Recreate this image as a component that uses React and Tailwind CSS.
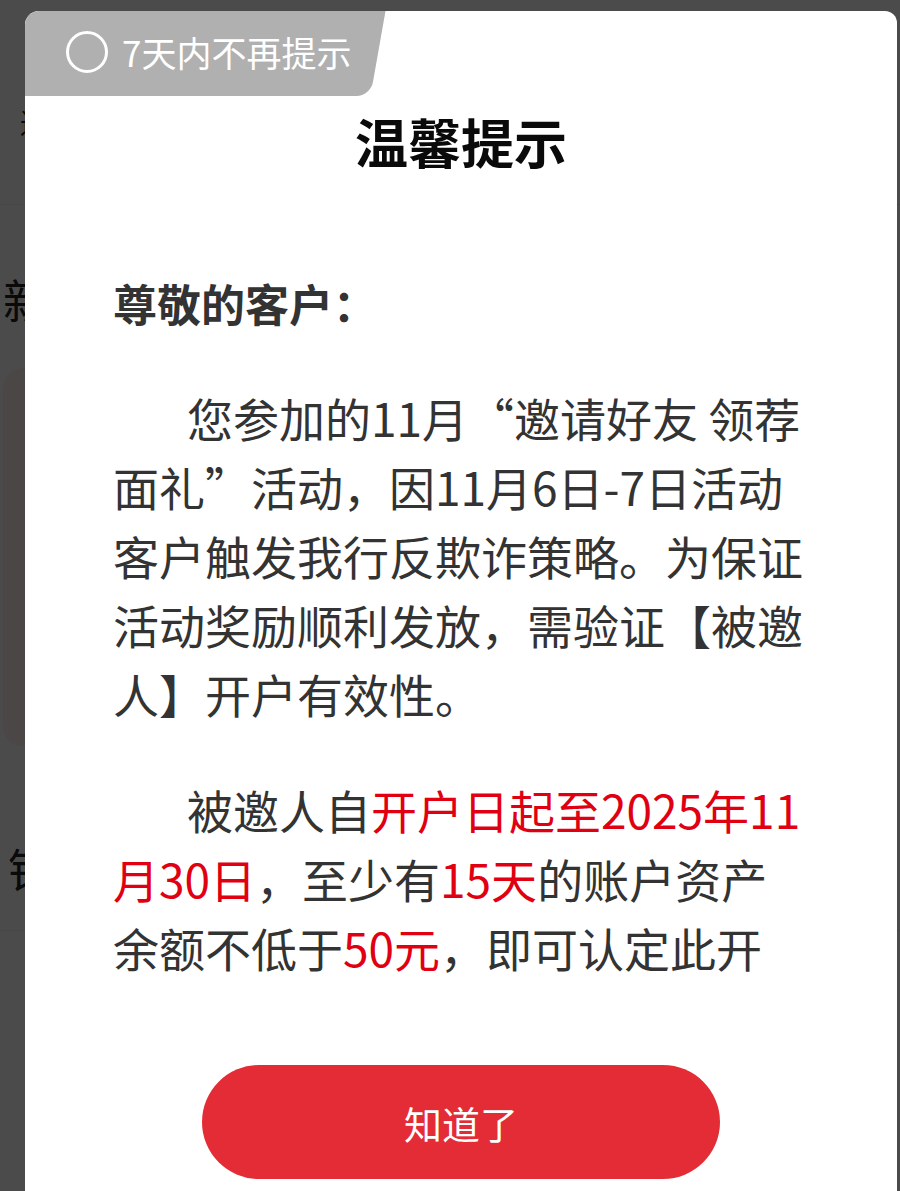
export default function App() {
    const font = { fontFamily: '"Noto Sans CJK SC", "Noto Sans", sans-serif' };

    return (
        <div lang="zh-CN" style={font} className="relative h-[1191px] w-full overflow-hidden bg-white">
            {/* page underneath the dialog */}
            <div className="text-[#222]">
                <div className="h-[205px] border-b border-[#f2f2f2] pl-[20px] pt-[104px] text-[28px] leading-[36px]">
                    返回活动
                </div>
                <div className="mt-[68px] pl-[3px] text-[46px] leading-[50px]">新人专享</div>
                <div className="mx-[3px] mt-[45px] h-[378px] rounded-[20px] bg-[#fdf2ee]" />
                <div className="mt-[96px] pl-[8px] text-[46px] leading-[50px]">银行卡</div>
                <div className="mt-[38px] border-t border-[#f0f0f0]" />
            </div>

            {/* dim layer */}
            <div className="absolute inset-0 bg-black/[0.705]" />

            {/* dialog */}
            <div className="absolute left-[25px] right-[3px] top-[11px] bottom-[-40px] flex flex-col overflow-hidden rounded-tl-[14px] rounded-tr-[12px] bg-white">
                <div className="flex h-[85px] shrink-0">
                    <div className="relative z-10 flex w-[330px] items-center gap-[14px] rounded-tl-[14px] bg-[#b0b0b0] pb-[4px] pl-[41px]">
                        <span className="h-[42px] w-[42px] rounded-full border-[3px] border-white" />
                        <span className="text-[35px] leading-none text-white">7天内不再提示</span>
                    </div>
                    <div className="-ml-[10px] w-[33px] rounded-br-[14px] bg-[#b0b0b0] [transform:skewX(-10deg)]" />
                </div>

                <h2 className="mt-[15px] text-center text-[53px] font-bold leading-[60px] text-[#0a0a0a]">温馨提示</h2>

                <div className="mt-[99px] h-[713px] shrink-0 overflow-hidden pl-[88px] pr-[90px] text-[#333]">
                    <p className="mb-[47px] text-[44px] font-bold leading-[66px]">尊敬的客户：</p>
                    <p className="mb-[47px] indent-[74px] text-[46px] leading-[69px]">
                        您参加的11月“邀请好友 领荐面礼”活动，因11月6日-7日活动客户触发我行反欺诈策略。为保证活动奖励顺利发放，需验证【被邀人】开户有效性。
                    </p>
                    <p className="indent-[74px] text-[46px] leading-[69px]">
                        被邀人自<span className="text-[#e00012]">开户日起至2025年11月30日</span>，至少有<span className="text-[#e00012]">15天</span>的账户资产余额不低于<span className="text-[#e00012]">50元</span>，即可认定此开户有效。
                    </p>
                </div>

                <button className="mx-auto mt-[82px] h-[114px] w-[518px] shrink-0 rounded-full bg-[#e32c35] text-[38px] text-white">
                    知道了
                </button>
            </div>
        </div>
    );
}
